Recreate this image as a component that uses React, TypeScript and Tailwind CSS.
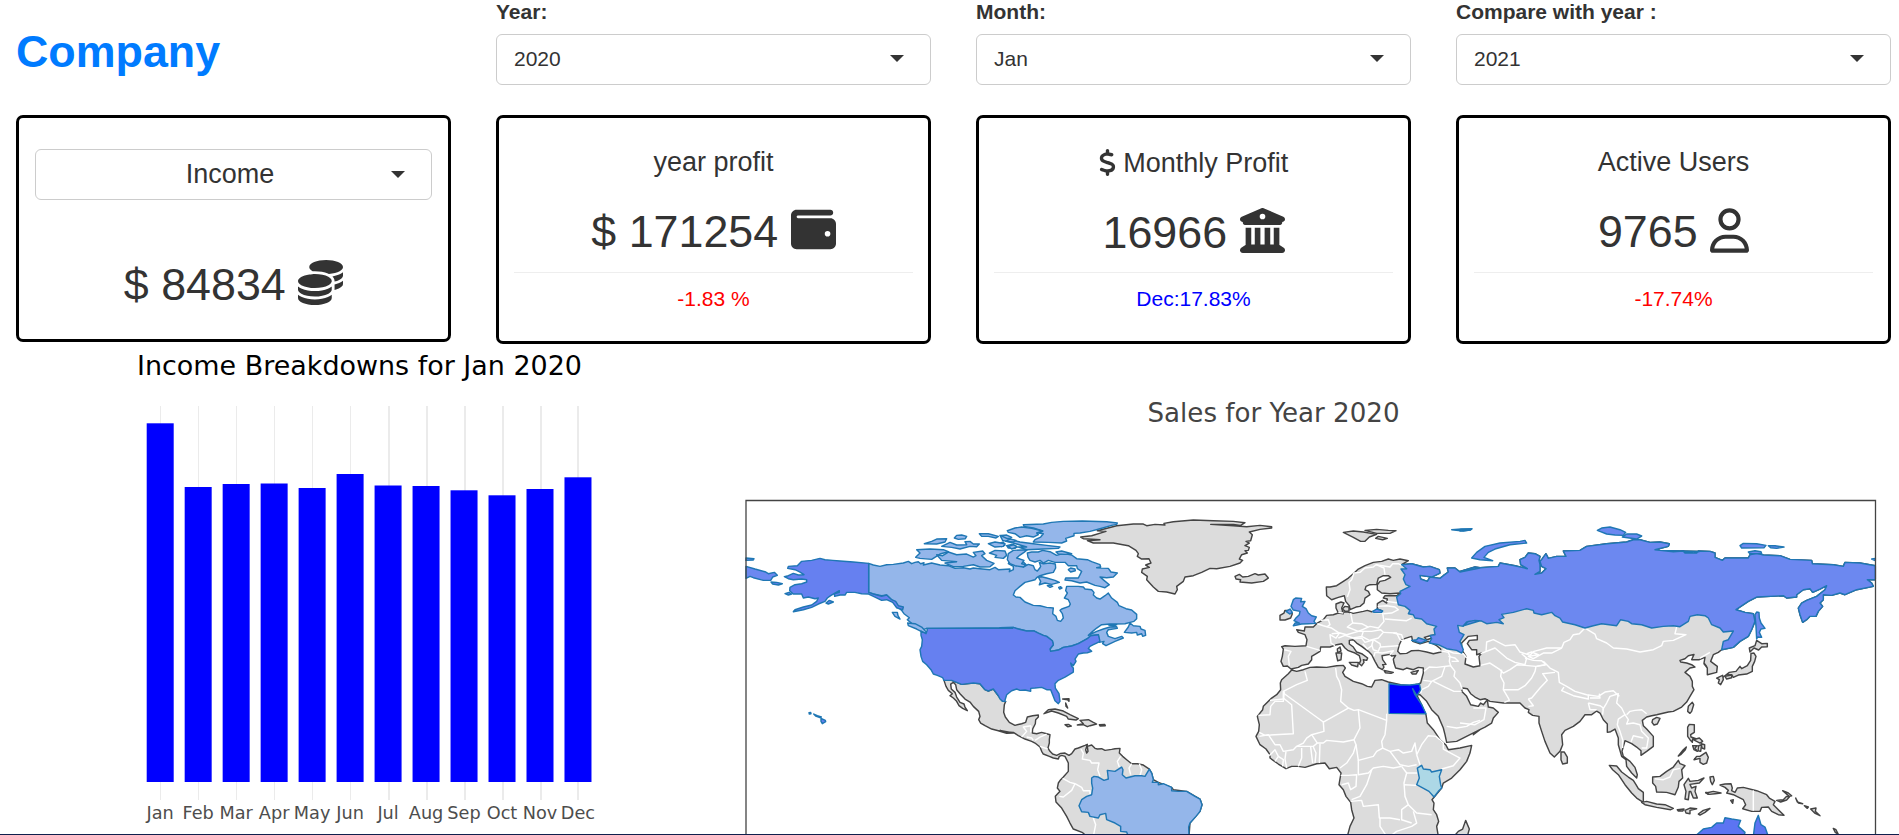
import React from "react";
import { FaBuildingColumns, FaCoins, FaDollarSign, FaRegUser, FaWallet } from "react-icons/fa6";

/* ---------- header and cards ---------- */

function Caret() {
  return (
    <svg className="h-[7px] w-[14px] shrink-0" viewBox="0 0 14 7">
      <path d="M0 0H14L7 7Z" fill="#333" />
    </svg>
  );
}

function Picker({ label, value }: { label: string; value: string }) {
  return (
    <div className="w-[435px]">
      <div className="mb-[10px] h-6 text-[21px] leading-6 font-bold">{label}</div>
      <div className="flex h-[51px] items-center justify-between rounded-[6px] border border-[#ccc] pr-[26px] pb-[2px] pl-[17px] text-[21px] leading-none">
        <span>{value}</span>
        <Caret />
      </div>
    </div>
  );
}

function StatCard({
  title,
  amount,
  icon,
  change,
  tone,
  low,
}: {
  title: React.ReactNode;
  amount: string;
  icon: React.ReactNode;
  change: string;
  tone: string;
  low?: boolean;
}) {
  return (
    <div className="h-[229px] w-[435px] rounded-[7px] border-[3px] border-black px-[15px] text-center">
      <div className={low ? "pt-[30px]" : "pt-[29px]"}>
        <div className="flex h-[30px] items-center justify-center text-[27px] leading-[30px] whitespace-pre">{title}</div>
      </div>
      <div className="mt-[29px] flex h-[50px] items-center justify-center text-[44.8px] leading-[50px] whitespace-pre">
        <span>{amount + " "}</span>
        {icon}
      </div>
      <div className={low ? "mt-[15px] h-px bg-[#eee]" : "mt-4 h-px bg-[#eee]"} />
      <div className={`mt-[11px] text-[21px] leading-[30px] ${tone}`}>{change}</div>
    </div>
  );
}

/* ---------- bar chart ---------- */

const months = [
  ["Jan", 423.3],
  ["Feb", 487],
  ["Mar", 484],
  ["Apr", 483.5],
  ["May", 488],
  ["Jun", 474],
  ["Jul", 485.5],
  ["Aug", 486],
  ["Sep", 490.3],
  ["Oct", 495.3],
  ["Nov", 489],
  ["Dec", 477.3],
] as const;

function IncomeChart() {
  return (
    <svg className="block h-[490px] w-[740px] shrink-0" viewBox="0 344 740 490" fontFamily="'DejaVu Sans', sans-serif">
      <text x="137" y="375" fontSize="26.5" fill="#000" textLength="445" lengthAdjust="spacingAndGlyphs">
        Income Breakdowns for Jan 2020
      </text>
      {months.map(([name, top], i) => {
        const cx = 160.2 + i * 37.98;
        return (
          <g key={name}>
            <rect x={Math.floor(cx)} y="406" width={i > 5 ? 2 : 1} height="394" fill="#ebebeb" />
            <rect x={cx - 13.5} y={top} width="27" height={782 - top} fill="#0000ff" />
            <text x={cx} y="818.5" fontSize="17.7" fill="#4d4d4d" textAnchor="middle">
              {name}
            </text>
          </g>
        );
      })}
    </svg>
  );
}

/* ---------- world map ---------- */

// Horizontal origins of the map sheets, in thirds of a pixel.
const A = 0;
const B = 780;
const C = 1470;
const D = 2160;
const E = 2760;

function trace(...parts: (number | string)[]) {
  const out: string[] = [];
  for (let i = 0; i < parts.length; i += 2) {
    const dx = parts[i] as number;
    for (const p of (parts[i + 1] as string).trim().split(/\s+/)) {
      const [x, y] = p.split(",").map(Number);
      out.push(`${x + dx} ${y}`);
    }
  }
  return "M" + out.join("L");
}

const shape = (...parts: (number | string)[]) => trace(...parts) + "Z";

const usNorth = "0,414 40,413 55,418 80,424 103,424 115,430 130,437 140,440 157,453 160,465 150,478 152,485 175,481 190,473 215,469 235,462 262,447 272,438 295,435";

const americas = shape(
  A, "612,572 635,572 665,584 700,580 720,582 735,600 745,604 760,598 775,618 788,635 797,635 793,645 791,668 796,682 808,698 825,707 845,702 857,698 862,682 878,678 895,676",
  B, "115,677 115,682 107,690 106,702 98,718 97,730 110,732 125,728 140,732 150,735 148,750 148,760 144,775 150,785 158,793 170,797 182,791 195,790 207,797 215,792 225,778 235,775 255,767 262,764 257,780 260,790 264,785 262,770 275,766 285,776 292,778 305,777 315,782 335,779 345,777 360,776 358,790 368,800 380,810 395,822 412,822 430,826 448,838 455,850 460,870 475,878 515,893 520,900 560,905 600,928 606,945 600,965 570,1000 567,1040 260,1040 248,1029 220,1018 210,1000 200,980 185,955 168,937 166,920 180,905 172,895 175,880 182,870 190,862 205,845 205,820 195,800 185,797 178,800 175,808 160,805 148,800 130,793 125,785 120,772 105,760 95,755 75,748 55,738 40,728 20,727 0,722",
  A, "820,730 800,731 775,723 755,718 735,708 722,700 716,690 720,680 716,665 700,650 690,637 675,628 660,612 650,600 647,585 640,578 632,583 634,598 645,608 650,622 660,638 672,643 675,652 682,663 668,656 657,648 650,635 640,625 630,618 637,612 625,602 618,590",
);

const canada = shape(
  A, "386,221 400,226 420,230 440,225 460,224 490,220 505,215 515,222 525,218 535,216 542,222 552,219 550,226 575,220 600,226 625,228 645,236 670,234 690,238 700,235 720,237 750,240 765,233 775,240 810,238 808,246 820,240 820,230 805,222 812,205 825,203 845,212 857,224 850,232 865,224 880,228 885,240 892,244 900,234",
  B, "122,230 118,218 130,222 150,220 166,223 167,235 160,248 140,252 120,258 110,264 105,270 75,278 60,290 45,303 40,316 48,322 60,323 75,337 100,347 120,348 140,353 160,355 158,372 168,380 172,392 182,395 190,385 187,372 180,362 185,358 207,350 211,343 205,330 193,325 202,310 197,303 200,290 235,290 250,292 255,298 275,300 282,308 280,316 290,325 300,328 315,318 325,310 335,325 352,338 357,348 378,357 395,361 410,374 410,387 402,395 375,402 345,403 330,403 305,405 290,415 278,425 265,437 290,425 310,418 330,412 350,411 352,416 325,420 320,428 325,440 345,447 365,440 370,445 345,455 318,468 308,462 312,455 298,458",
  B, usNorth.split(" ").reverse().join(" "),
  A, "822,414 560,416 550,420 535,412 515,401 502,390 508,384 492,372 485,362 470,348 455,330 440,316 425,318 400,313 386,308",
);

const usa = shape(
  A, "560,416 818,416",
  B, usNorth + " 300,455 290,460 280,465 270,470 265,476 275,485 262,489 250,490 235,493 225,508 228,515 220,528 212,520 215,530 220,535 220,547 195,562 175,572 165,582 166,595 177,612 180,635 175,642 165,633 158,615 152,600 140,600 125,593 105,595 92,596 92,605 75,601 60,602 50,598 35,603 20,615 14,635",
  A, "797,635 788,635 780,628 775,618 760,598 745,604 735,600 720,582 700,580 665,584 635,572 612,572 608,564 592,557 580,553 573,540 560,525 548,515 543,500 540,480 545,470 547,450 543,437 543,424 558,432 562,420",
);

const alaska = shape(A, "386,221 340,217 300,214 278,212 255,210 240,206 215,212 185,215 172,228 145,230 143,236 165,240 180,247 192,255 175,256 160,251 145,258 133,261 145,267 160,270 185,268 200,270 200,277 185,282 165,285 150,293 149,303 160,313 185,313 190,325 205,322 225,327 235,325 230,335 215,346 190,352 165,360 160,366 190,360 215,353 235,343 255,335 262,325 272,318 282,312 298,303 298,308 283,312 284,320 300,316 315,316 320,308 345,308 365,312 386,313 405,322 425,332 440,330 458,338 470,354 488,360 490,352 475,348 467,335 455,330 440,316 425,320 400,313 386,308");

const eurasiaAfrica = shape(
  C, "535,213 510,208 490,212 475,208 455,215 430,218 405,228 385,238 370,252 355,265 340,275 320,288 300,292 289,292 290,318 305,330 325,323 343,318 347,335 358,348 360,360 378,352 390,350 402,340 405,325 420,315 415,305 405,300 408,290 420,285 440,284 445,265 460,258 475,258 482,263 465,272 450,275 442,285 442,300 455,310 480,312 510,310 500,318 465,318 460,325 472,328 470,340 458,332 442,342 442,358 455,363 425,366 412,362 400,365 370,371 350,366 325,370 318,355 318,343 333,337 342,340 335,355 340,372 325,370 310,375 290,377 280,390 262,400 250,412 225,412 223,424 200,420 205,428 225,435 231,450 228,468 195,470 165,468 155,471 160,478 157,500 153,515 160,530 172,529 183,538 205,533 215,527 235,523 245,510 245,500 270,485 272,472 300,472 320,465 335,462 345,475 355,483 375,490 388,498 392,512 388,522 395,528 402,518 400,510 410,512 413,505 395,492 380,487 370,472 358,463 358,452 370,450 380,460 395,470 415,485 425,495 435,515 445,533 457,540 462,532 458,525 468,524 458,510 456,498 480,494 485,499 497,497 490,508 492,520 497,535 520,540 530,535 550,540 565,533 580,535 580,550 572,580 565,583 540,588 512,585 475,577 455,570 435,572 425,592 412,590 395,582 370,575 345,560 338,548 346,535 340,527 320,528 290,533 260,532 240,533 220,540 200,545 185,541 175,552 155,570 151,580 152,600 140,615 125,625 100,650 98,660 82,680 88,705 86,725 78,740 90,765 108,778 120,795 120,805 145,823 168,837 185,830 205,830 225,833 260,822 285,820 298,837 320,833 333,850 327,885 340,900 348,920 362,938 365,960 372,985 360,1010 352,1040 625,1040 620,1010 626,995 620,975 610,960 612,940 606,930 635,895 640,880 665,865 690,840 710,815 720,790 725,767 690,775 655,780 647,765 630,750 610,720 592,700 588,675 575,645 560,615 570,615 590,635 605,660 625,680 640,715 645,735 650,758 680,755 720,735 750,720",
  D, "40,735 55,722 75,712 95,700 100,685 115,668 100,655 85,652 82,630 70,645 62,640 55,650 32,645 20,620 5,605 8,595 22,597 32,612 45,622 60,630 75,627 90,635 130,640 180,640 195,655 207,660 205,668 218,677 237,680 237,700 245,725 255,755 270,790 283,802 300,785 308,765 305,735 315,722 340,710 360,695 375,675 395,675 410,664 420,670 430,690 442,703 442,728 452,726 465,718 475,745 475,765 485,800 498,810 500,830 515,850 530,865 532,855 525,833 510,815 490,800 486,785 495,753 515,762 530,772 543,783 543,797 560,785 580,770 580,740 560,718 550,708 547,692 560,682 575,678 590,675 625,667 640,665 665,652 680,637 690,620 702,600 697,590 697,575 690,560 675,548 690,535 705,532 695,525 680,520 662,517 660,512 675,507 685,498 702,494 695,510 718,510 735,503 732,520 740,530",
  E, "132,522 142,535 142,555 170,548 172,530 152,515 160,495 175,488 185,480 220,473 240,455 265,440 275,420 285,395 280,372 255,368 228,360 265,335 290,322 370,318 380,325 410,322 410,315 430,300 450,297 458,308 480,298 500,288 495,300 470,320 440,332 425,340 415,355 420,375 428,398 440,390 450,380 468,380 475,365 488,350 480,340 490,330 490,315 515,317 540,310 555,315 590,300 640,290 635,280 622,270 646,270 646,228 600,220 555,218 550,230 520,225 457,222 455,212 390,209 360,198 310,196 290,190 270,195 265,205 195,205 187,212 165,203 165,190 150,185 115,184 110,190 75,190 70,185 45,184 0,182",
  D, "720,185 700,190 670,184 640,186 600,182 585,180 625,170 628,162 600,157 570,158 540,150 520,150 500,157 440,162 380,170 360,182 310,184 318,200 290,200 265,206 258,192 247,207 240,215 245,230 258,237 245,250 225,254 240,245 240,225 237,212 240,200 225,192 205,190 195,203 180,210 182,225 202,237 165,228 120,220 115,230 60,234 45,232 0,245",
  C, "750,235 690,247 675,235 652,235 655,247 640,258 630,266 600,262 592,275 572,268 570,257 605,262 630,250 628,240 600,230 580,232 545,222 515,225",
);

const russia = shape(
  C, "515,225 530,237 513,238 525,255 520,268 528,285 540,290 510,305 512,312 500,322 505,345 525,350 540,362 535,372 550,375 555,385 575,388 590,402 620,410 612,418 615,435 600,437 605,447 598,460 625,465 650,477 680,482 695,490 700,480 690,455 702,435 688,428 683,407 700,410 715,395 735,392 750,393",
  D, "10,408 20,397 45,392 65,394 80,402 110,398 130,402 117,390 132,384 125,374 160,368 200,357 220,362 222,370 245,375 275,368 285,378 300,385 308,397 345,405 375,415 400,408 425,402 470,408 482,390 505,395 515,402 545,405 575,415 610,410 640,408 660,411 685,395 690,380 712,375 735,378",
  E, "145,385 155,405 180,415 190,427 220,424 205,450 190,455 185,480 220,473 240,455 265,440 275,420 285,395 280,372 255,368 228,360 265,335 290,322 370,318 380,325 410,322 410,315 430,300 450,297 458,308 480,298 500,288 495,300 470,320 440,332 425,340 415,355 420,375 428,398 440,390 450,380 468,380 475,365 488,350 480,340 490,330 490,315 515,317 540,310 555,315 590,300 640,290 635,280 622,270 646,270 646,228 600,220 555,218 550,230 520,225 457,222 455,212 390,209 360,198 310,196 290,190 270,195 265,205 195,205 187,212 165,203 165,190 150,185 115,184 110,190 75,190 70,185 45,184 0,182",
  D, "720,185 700,190 670,184 640,186 600,182 585,180 625,170 628,162 600,157 570,158 540,150 520,150 500,157 440,162 380,170 360,182 310,184 318,200 290,200 265,206 258,192 247,207 240,215 245,230 258,237 245,250 225,254 240,245 240,225 237,212 240,200 225,192 205,190 195,203 180,210 182,225 202,237 165,228 120,220 115,230 60,234 45,232 0,245",
  C, "750,235 690,247 675,235 652,235 655,247 640,258 630,266 600,262 592,275 572,268 570,257 605,262 630,250 628,240 600,230 580,232 545,222 515,225",
);

const russiaIslands = [
  shape(A, "18,230 45,238 75,246 85,252 103,248 112,257 98,262 92,272 70,272 40,264 30,260 18,266"),
  shape(A, "18,205 42,207 40,211 18,212"),
  shape(C, "665,120 695,118 725,118 720,121 700,124"),
  shape(D, "0,119 36,117 30,121 0,124"),
  shape(D, "35,205 50,188 75,170 120,160 180,155 195,152 200,160 150,165 105,178 85,188 72,203 98,213 60,210"),
  shape(D, "412,122 425,115 450,112 480,120 497,128 490,137 465,136 440,133"),
  shape(D, "487,142 500,133 530,133 545,139 530,148"),
  shape(E, "240,168 250,161 290,162 318,167 312,174 245,175"),
  shape(E, "325,168 345,168 372,172 350,176 332,174"),
  shape(E, "265,187 285,183 303,186 305,192 270,192"),
  shape(E, "635,208 646,206 646,213"),
  shape(E, "285,375 290,367 297,368 298,385 303,400 315,416 303,418 298,428 305,443 293,442 290,448 288,410"),
  shape(C, "428,365 440,358 458,364 455,368 432,368"),
  shape(C, "545,452 560,450 565,444 590,452 572,460"),
];

const canadaIslands = [
  shape(B, "82,190 95,187 115,187 128,182 150,186 170,197 190,191 215,196 230,207 262,210 275,216 300,225 302,232 290,234 325,236 333,247 352,250 340,262 320,264 300,262 312,272 328,285 315,294 300,290 285,287 260,277 240,280 215,273 195,271 197,265 235,265 245,245 232,237 230,228 205,228 195,218 165,218 145,212 130,220 120,212 105,217 90,212 84,202"),
  shape(B, "115,262 125,261 140,265 165,272 178,278 155,284 135,280 118,285 122,275"),
  shape(B, "142,288 150,286 158,290 150,293"),
  shape(B, "176,293 182,291 186,295 179,298"),
  shape(B, "205,240 212,235 225,238 226,243 212,247"),
  shape(B, "70,105 130,103 155,98 190,95 247,94 320,96 352,100 350,104 335,107 300,117 270,125 240,130 222,131 222,138 197,146 200,154 185,160 145,158 100,157 105,150 122,142 130,132 115,130 128,124 100,115 72,110"),
  shape(B, "22,123 45,115 65,112 95,116 128,124 110,130 115,135 100,142 80,138 60,143 45,132 25,128"),
  shape(B, "0,137 20,138 35,150 60,157 100,162 140,167 180,172 175,176 130,178 80,180 55,172 80,172 50,163 20,155 8,152"),
  shape(B, "168,187 185,184 215,192 195,194 175,193"),
  shape(B, "20,168 35,164 50,170 45,176 25,175"),
  shape(B, "25,192 40,182 82,180 72,188 60,196 50,205 72,212 65,222 78,225 70,232 45,228 30,222 22,210"),
  shape(B, "2,160 10,157 15,166 5,171"),
  shape(A, "527,203 540,190 530,180 570,178 610,180 625,186 600,193 575,209 540,206"),
  shape(A, "590,195 608,198 625,187 650,195 680,193 700,202 708,198 700,188 728,184 735,192 725,198 740,212 762,221 750,231 720,232 700,225 670,230 640,231 615,220 650,216 605,212"),
  shape(A, "553,162 575,155 590,148 620,147 615,157 590,163"),
  shape(A, "605,170 630,158 650,166 680,165 675,156 690,155 700,163 718,163 710,171 690,170 660,178 635,173"),
  shape(A, "643,145 650,137 665,136 680,140 676,147 655,149"),
  shape(A, "718,132 745,132 775,140 768,145 745,140 725,140"),
  shape(A, "745,162 765,157 795,162 790,170 765,172"),
  shape(A, "748,190 765,182 795,184 800,197 790,206 765,203 770,197"),
  shape(A, "782,138 800,136 815,143 802,147"),
  shape(A, "797,155 810,148 828,152 820,157"),
  shape(A, "805,170 820,165 832,172 815,178"),
  shape(A, "457,368 472,368 474,378 480,388 465,380"),
  shape(A, "503,400 525,402 545,412 560,428 555,431 530,418 505,408"),
  shape(B, "373,428 385,412 390,400 400,408 420,410 423,418 435,422 437,437 428,440 425,432 412,436 410,428 395,430"),
  shape(B, "325,405 350,405 340,410"),
];

const usaIslands = [
  shape(A, "258,340 268,332 280,337 265,343"),
  shape(A, "93,277 110,278 127,282 115,286 98,283"),
  shape(A, "135,312 147,308 155,313 145,316"),
  shape(A, "207,669 212,668 213,672 208,673"),
  shape(A, "221,673 232,678 244,682 240,684 227,679"),
  shape(A, "243,686 256,692 257,696 247,702 243,695"),
];

const brazil = shape(B, "275,865 282,860 295,862 312,872 325,868 322,842 345,845 365,832 369,840 367,855 378,865 405,858 425,858 435,860 448,838 455,850 460,870 457,878 475,878 475,885 490,882 515,893 515,903 535,905 560,905 585,920 600,928 606,945 600,965 588,980 570,1000 566,1012 567,1040 385,1040 380,1027 362,1025 362,1010 345,1000 320,990 317,971 300,975 295,985 270,980 265,968 245,966 237,948 245,930 260,920 275,915 278,895 275,880");
const egypt = shape(C, "477,582 510,586 540,586 568,583 572,600 563,615 560,617 548,597 555,615 575,645 588,672 477,671");
const kenya = shape(C, "562,835 575,827 580,838 600,840 605,847 635,840 628,860 632,885 635,895 625,905 612,922 597,905 560,885 568,865");
const uk = [
  shape(C, "183,350 190,330 197,325 215,326 212,336 225,335 217,350 228,357 235,370 245,378 259,382 252,395 257,401 235,402 215,403 190,408 195,400 208,400 192,393 197,386 208,375 210,365 190,361"),
  shape(C, "168,365 180,358 187,368 180,373"),
];
const australia = [
  shape(E, "105,1040 130,1018 155,1013 170,1000 190,1000 195,984 215,988 242,992 235,1010 255,1028 252,1040"),
  shape(E, "280,1040 285,1000 295,977 303,1005 315,1012 325,1040"),
];

const greyIslands = [
  shape(B, "242,142 275,138 318,125 292,123 350,108 400,103 430,103 440,108 465,104 495,106 492,101 520,96 580,91 640,93 700,95 735,99 722,107 700,104 632,104 700,108 740,111 780,107 815,111 815,115 780,119 748,127 757,135 752,153 738,155 748,160 735,168 748,173 745,182 735,183 742,190 725,195 718,208 728,212 720,220 690,230 650,237 630,236 605,248 580,258 555,262 550,275 530,290 532,300 525,313 500,307 475,305 460,292 440,270 442,260 425,248 427,238 448,233 437,226 453,220 447,207 425,208 412,200 415,192 408,182 385,168 340,160 280,160 262,153 300,150 250,147"),
  shape(B, "705,260 718,254 728,262 745,260 765,252 775,256 795,253 805,265 790,275 755,280 720,277 722,270 708,268"),
  shape(B, "132,672 145,660 165,658 190,664 210,675 235,687 228,691 205,688 200,680 175,670 155,664"),
  shape(B, "240,692 265,690 280,698 290,703 270,708 262,711 250,705 232,706 250,702"),
  shape(B, "195,705 205,704 214,709 203,711"),
  shape(B, "298,705 314,704 316,708 300,709"),
  shape(B, "188,628 207,627 207,635 203,630"),
  shape(B, "197,640 203,655 198,650"),
  shape(C, "150,377 162,370 165,362 175,362 187,372 182,385 165,391 150,391"),
  shape(C, "340,128 370,124 400,127 440,134 418,142 405,155 392,155 370,143"),
  shape(C, "405,122 440,119 475,122 498,123 480,131 440,131"),
  shape(C, "437,146 445,140 472,146 458,150"),
  shape(C, "345,350 357,352 357,364 346,365 337,358"),
  shape(C, "322,478 330,472 333,484 323,489"),
  shape(C, "318,490 335,490 333,510 323,513"),
  shape(C, "358,518 385,518 383,531 365,526"),
  shape(C, "462,542 490,548 483,551 466,549"),
  shape(C, "543,548 565,542 558,553 547,553"),
  shape(C, "672,1040 685,1025 698,1018 707,992 718,1018 712,1040"),
  shape(D, "303,787 313,787 322,802 322,820 308,823 303,810"),
  shape(D, "578,690 590,683 600,686 592,703 582,706 576,698"),
  shape(D, "448,827 470,829 485,847 505,862 520,872 528,885 535,897 550,908 550,938 530,925 515,910 495,885 475,855 458,840"),
  shape(D, "545,938 560,935 590,943 615,945 640,956 632,960 590,953 555,945"),
  shape(D, "578,862 600,860 620,845 640,832 655,812 660,822 675,828 665,840 668,865 657,875 655,892 645,915 620,908 590,907 587,890 578,880"),
  shape(D, "672,885 685,866 690,875 715,872 732,865 718,880 690,884 695,895 708,890 705,905 712,925 700,925 692,905 688,905 685,930 675,928 678,905"),
  shape(D, "652,960 672,958 668,964 655,964"),
  shape(D, "675,962 690,955 710,957 690,962 690,972 678,970"),
  shape(D, "715,973 730,962 750,956 735,968 720,976"),
  shape(D, "737,908 752,910 745,914"),
  shape(E, "150,862 160,860 163,872 157,885 152,875"),
  shape(E, "138,910 160,905 183,910 165,912 148,914"),
  shape(E, "212,932 220,930 218,941"),
  shape(E, "180,886 195,883 213,882 217,895 215,903 225,908 232,895 250,893 290,903 320,915 328,925 345,935 340,945 355,960 372,977 355,975 335,965 325,952 305,953 300,965 275,965 248,957 257,945 250,930 220,915 200,910 205,902 195,893"),
  shape(E, "350,932 370,930 380,920 388,922 380,931 362,937"),
  shape(E, "368,903 385,910 395,918 388,920"),
  shape(E, "407,925 412,937 428,942 415,940"),
  shape(E, "433,948 445,952 442,956"),
  shape(E, "452,958 468,955 466,965 480,978 464,970"),
  shape(E, "520,1016 528,1020 535,1034 526,1028"),
  shape(E, "83,712 88,704 103,705 103,728 92,735 93,742 110,748 98,748 97,758 90,750 83,740"),
  shape(E, "100,750 118,745 128,755 120,760"),
  shape(E, "98,768 112,768 105,775 112,785 102,780"),
  shape(E, "116,768 125,765 122,785 114,783"),
  shape(E, "124,762 134,765 134,778 126,775"),
  shape(E, "102,810 110,800 120,800 138,788 145,803 140,820 130,824 120,818 120,806"),
  shape(E, "55,799 70,780 79,772 76,780 62,795"),
  shape(E, "83,665 85,650 97,638 101,645 95,665 90,671"),
  shape(E, "290,452 305,462 322,461 322,471 305,472 296,481 282,475 270,487 268,475 285,468"),
  shape(E, "273,491 282,490 288,500 284,515 277,530 277,545 260,553 235,556 220,563 215,555 198,556 190,562 208,548 228,545 240,530 245,537 262,528 272,512"),
  shape(E, "170,565 188,557 190,570 182,585 175,580 178,570"),
  shape(E, "195,560 215,556 215,564 200,568"),
];

const water = [
  shape(C, "503,485 508,465 515,450 535,443 545,440 548,455 570,462 595,455 620,468 632,478 633,487 610,492 590,487 565,482 545,483 530,491 510,492"),
  shape(D, "5,460 25,440 52,437 52,450 28,452 22,462 35,480 50,480 50,495 65,490 57,500 60,528 40,532 15,523 18,500 5,480"),
  shape(C, "583,443 600,438 612,436 607,445 590,450"),
];

const borders = [
  trace(C, "352,322 360,300 357,278 365,270 372,250 390,248 405,235 430,232 438,225 462,235 465,255"),
  trace(C, "438,225 480,232 488,222 505,222 530,235"),
  trace(C, "230,470 270,482"),
  trace(C, "163,480 183,485 175,500 178,528"),
  trace(C, "262,402 280,408 305,415 328,430 318,445 300,435 303,460 315,468"),
  trace(C, "272,392 295,390 300,405 290,412"),
  trace(C, "362,370 368,400 352,412 385,425 420,410 445,415 462,395 458,370 428,368"),
  trace(C, "368,400 395,402 415,412"),
  trace(C, "305,432 330,430 350,435 385,425 400,425 395,440 370,445 345,437 325,445"),
  trace(C, "385,425 425,425 452,420 460,428 445,445 418,452 395,440"),
  trace(C, "370,447 395,445 405,458 430,450 425,468 412,478 398,462"),
  trace(C, "460,428 500,430 510,450 522,455"),
  trace(C, "430,450 450,462 452,472 505,468"),
  trace(C, "450,472 445,485 430,480 425,465"),
  trace(C, "432,500 435,488 458,490 490,483 480,495"),
  trace(C, "490,430 515,435 520,450"),
  trace(C, "470,335 505,340"),
  trace(C, "443,350 470,348 495,352 505,360 485,370 460,372"),
  trace(C, "465,388 530,393 545,385"),
  trace(C, "325,368 340,370"),
  trace(C, "625,482 655,488 660,500 658,515 662,528 620,533 598,532 582,545"),
  trace(C, "640,478 670,490 700,492 710,505"),
  trace(C, "655,500 675,505 685,515 665,515"),
  trace(C, "662,528 675,545 672,560 690,580 697,600"),
  trace(C, "645,530 635,560 605,575 580,572"),
  trace(C, "610,575 645,592 672,605 695,605"),
  trace(C, "605,575 595,590 575,600 572,610"),
  trace(C, "650,710 680,715 710,710 730,698 750,692"),
  trace(D, "0,700 45,705 72,690 78,655 40,655"),
  trace(C, "225,545 232,572 200,585 160,605 160,628 120,632"),
  trace(C, "85,677 120,675 122,650 135,635 160,635 163,605"),
  trace(C, "160,625 185,645 190,732 105,737 88,728"),
  trace(C, "160,610 280,697 355,655"),
  trace(C, "317,535 320,560 328,575 335,600 332,635 355,655 372,662 385,660 470,692 470,672"),
  trace(C, "477,580 475,672"),
  trace(C, "280,697 282,725 245,735 230,745 220,760 200,770"),
  trace(C, "385,660 390,715 372,750 378,765 370,790 350,820 330,835"),
  trace(C, "245,735 262,760 280,760 290,752 340,757 372,750"),
  trace(C, "470,692 465,735 455,755 458,775 440,785 430,800 385,812 378,765"),
  trace(C, "458,775 480,785 505,780 520,790 545,785 555,760 560,795"),
  trace(C, "480,785 510,825 535,830 560,825"),
  trace(C, "560,795 575,765 595,738 618,740 640,760 640,778 690,805 670,828 635,838"),
  trace(C, "560,795 570,825"),
  trace(C, "385,812 385,855 415,850 430,835 460,830 490,835 515,830"),
  trace(C, "332,857 355,857 380,855 378,890 362,900 355,880 335,885"),
  trace(C, "362,935 395,932 400,950 445,945 448,985 480,985 510,990"),
  trace(C, "425,840 410,885 390,920 365,930"),
  trace(C, "515,830 530,850 522,880 525,920 535,945 515,960 515,990 545,1000"),
  trace(C, "530,850 562,850"),
  trace(C, "522,885 560,887"),
  trace(C, "535,945 560,970 605,975"),
  trace(C, "550,965 560,1000 545,1010 500,1025 480,1040"),
  trace(C, "450,985 450,1010 460,1025 470,1040"),
  trace(C, "88,740 115,735 135,765 150,765 160,785 190,780 200,770 215,770 250,770 262,760"),
  trace(C, "168,785 165,808 170,835"),
  trace(C, "215,775 215,805 205,830"),
  trace(C, "242,772 248,820"),
  trace(C, "250,772 258,790 255,820"),
  trace(C, "270,762 268,820"),
  trace(C, "118,798 135,780 145,800 135,815"),
  trace(C, "145,800 160,810 158,830"),
  trace(D, "78,487 80,457 100,450 135,468 165,465 180,487 210,497 222,485 260,475 305,475 312,458 330,450 340,435 358,432 375,415"),
  trace(D, "62,492 105,475 140,505 165,518 195,525 200,505 185,492"),
  trace(D, "200,492 215,487 235,495 205,500 220,507 250,490 275,490 305,475"),
  trace(D, "195,505 220,512 245,513 258,525 230,530"),
  trace(D, "62,527 90,520 120,540 130,550 150,540 172,525 195,527 228,530 255,525"),
  trace(D, "125,540 122,560 132,580 130,600 145,625 148,632 133,638"),
  trace(D, "130,600 175,600 195,588 215,565 225,545 228,530"),
  trace(D, "205,628 215,625 240,595 262,572 248,552 285,548"),
  trace(D, "205,628 220,648 205,650"),
  trace(D, "250,515 270,535 295,548 298,578 320,590 345,605 380,615 415,620 435,607 460,603 478,620"),
  trace(D, "312,592 305,603 340,618 385,628 385,615"),
  trace(D, "390,625 420,625 418,612"),
  trace(D, "385,640 390,660 410,660"),
  trace(D, "385,640 420,648 430,655 428,675"),
  trace(D, "428,660 440,640 450,620 475,612 470,640 485,655 495,675 475,688 472,705 480,725 488,750 488,775"),
  trace(D, "500,675 510,665 525,662 545,660 560,672"),
  trace(D, "495,675 505,690 500,703 520,700 540,705 545,725 565,745 560,775 545,775"),
  trace(D, "513,757 520,738 550,745"),
  trace(D, "375,415 405,433 410,447 440,460 460,475 500,478 540,487 580,480 605,468 610,455 640,452 678,435 645,432 650,412"),
  trace(D, "720,505 750,488"),
  trace(D, "585,867 610,870 630,862 640,840 660,836"),
  trace(E, "280,902 280,963"),
  trace(B, "243,778 250,790 247,808 270,812 275,820 297,820 293,840 300,860"),
  trace(B, "362,800 352,815 358,832"),
  trace(B, "395,822 387,835 392,855"),
  trace(B, "418,822 425,840 420,858"),
  trace(B, "188,866 210,878 225,882 245,893 250,903 270,903 270,915"),
  trace(B, "225,882 215,902 190,922 178,920"),
  trace(B, "278,980 287,1005 280,1040"),
  trace(B, "93,708 70,712 80,725 65,742"),
  trace(B, "93,708 92,728"),
  trace(B, "80,742 95,745 100,752"),
  trace(B, "105,752 120,742 140,733"),
  trace(B, "120,770 143,778"),
];

function Shapes({ items, fill, stroke }: { items: string[]; fill: string; stroke: string }) {
  return (
    <g fill={fill} stroke={stroke} strokeWidth="4.3" strokeLinejoin="round">
      {items.map((d, i) => (
        <path key={i} d={d} />
      ))}
    </g>
  );
}

function SalesMap() {
  return (
    <svg className="block h-[490px] w-[1159px] shrink-0" viewBox="740 344 1159 490">
      <text
        x="1147.5"
        y="421.5"
        fontFamily="'DejaVu Sans', sans-serif"
        fontSize="26.5"
        fill="#444"
        textLength="252"
        lengthAdjust="spacingAndGlyphs"
      >
        Sales for Year 2020
      </text>
      <g transform="translate(740 489.7) scale(0.33333)">
        <Shapes items={[americas, eurasiaAfrica, ...greyIslands]} fill="#dcdcdc" stroke="#444" />
        <Shapes items={water} fill="#fff" stroke="#444" />
        <Shapes items={borders} fill="none" stroke="#fff" />
        <Shapes items={[canada, ...canadaIslands, brazil]} fill="#94b6ea" stroke="#1f77b4" />
        <Shapes items={[usa, alaska, ...usaIslands]} fill="#6680f0" stroke="#1f77b4" />
        <Shapes items={[russia, ...russiaIslands]} fill="#6c88f0" stroke="#1f77b4" />
        <Shapes items={uk} fill="#7895ee" stroke="#1f77b4" />
        <Shapes items={australia} fill="#5c74f2" stroke="#1f77b4" />
        <Shapes items={[egypt]} fill="#0000ff" stroke="#1f77b4" />
        <Shapes items={[kenya]} fill="#add8e6" stroke="#1f77b4" />
      </g>
      <path d="M746 834V500.5H1875.5V834" fill="none" stroke="#444" strokeWidth="1.3" />
    </svg>
  );
}

export default function App() {
  return (
    <div className="flex h-[835px] w-[1899px] flex-col overflow-hidden bg-white font-['Liberation_Sans',Arial,sans-serif] text-[#333]">
      <header className="flex h-[115px] shrink-0 gap-[45px] pl-4">
        <h1 className="w-[435px] pt-[26px] text-[44.8px] leading-[50px] font-bold text-[#007bff]">Company</h1>
        <Picker label="Year:" value="2020" />
        <Picker label="Month:" value="Jan" />
        <Picker label="Compare with year :" value="2021" />
      </header>

      <section className="flex h-[229px] shrink-0 gap-[45px] pl-4">
        <div className="h-[227px] w-[435px] rounded-[7px] border-[3px] border-black px-4 pt-[31px]">
          <div className="flex h-[51px] items-center rounded-[6px] border border-[#ccc] pr-[26px] pb-px pl-[18px]">
            <span className="flex-1 pl-[15px] text-center text-[27px] leading-[48px]">Income</span>
            <Caret />
          </div>
          <div className="mt-[59px] flex h-[50px] items-center justify-center text-[44.8px] leading-[50px] whitespace-pre">
            <span>{"$ 84834 "}</span>
            <FaCoins className="mb-[3px] h-[45px] w-[45px]" />
          </div>
        </div>
        <StatCard
          title="year profit"
          amount="$ 171254"
          icon={<FaWallet className="mb-[3px] h-[45px] w-[45px]" />}
          change="-1.83 %"
          tone="text-[#ff0000]"
        />
        <StatCard
          low
          title={
            <>
              <FaDollarSign className="mb-[2px] h-[27px] w-[17px]" />
              <span> Monthly Profit</span>
            </>
          }
          amount="16966"
          icon={<FaBuildingColumns className="mb-[3px] h-[45px] w-[45px]" />}
          change="Dec:17.83%"
          tone="text-[#0000ff]"
        />
        <StatCard
          title="Active Users"
          amount="9765"
          icon={<FaRegUser className="mb-[2px] h-[45px] w-[39px]" />}
          change="-17.74%"
          tone="text-[#ff0000]"
        />
      </section>

      <section className="flex h-[490px] shrink-0">
        <IncomeChart />
        <SalesMap />
      </section>
      <div className="h-px shrink-0 bg-[#0f1f4d]" />
    </div>
  );
}
